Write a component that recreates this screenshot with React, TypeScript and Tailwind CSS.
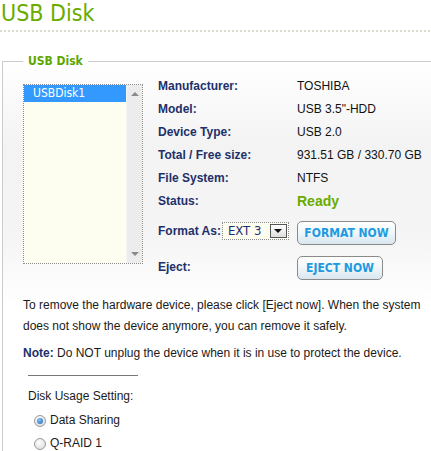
import React from 'react';

const tahoma = "font-['DejaVu_Sans_Condensed','DejaVu_Sans',sans-serif]";

const rows: { label: string; value: string }[] = [
  { label: 'Manufacturer:', value: 'TOSHIBA' },
  { label: 'Model:', value: 'USB 3.5"-HDD' },
  { label: 'Device Type:', value: 'USB 2.0' },
  { label: 'Total / Free size:', value: '931.51 GB / 330.70 GB' },
  { label: 'File System:', value: 'NTFS' },
];

const Radio: React.FC<{ checked?: boolean; label: string }> = ({ checked, label }) => (
  <div className="flex items-center h-[23px] leading-[23px]">
    <span className="ml-[6px] w-[12px] h-[12px] rounded-full border border-[#9a9a9a] bg-[radial-gradient(circle_at_40%_35%,#ffffff,#d6d6d6)] flex items-center justify-center">
      {checked && (
        <span className="w-[6px] h-[6px] rounded-full bg-[radial-gradient(circle_at_40%_35%,#7fc4ff,#1d5fae)]"></span>
      )}
    </span>
    <span className="ml-[4px]">{label}</span>
  </div>
);

const ActionButton: React.FC<{ children: React.ReactNode; className: string }> = ({ children, className }) => (
  <button
    className={`${className} ${tahoma} rounded-[5px] border border-[#8a8a8a] bg-[linear-gradient(to_bottom,#ffffff,#f2f7fa_45%,#d8e6ee)] text-[12px] font-semibold text-[#1e9be0] flex items-center justify-center`}
  >
    {children}
  </button>
);

export default function App() {
  return (
    <div className="w-[431px] h-[451px] overflow-hidden bg-white font-['Liberation_Sans',Arial,sans-serif] text-[12px] text-[#1a1a1a]">
      {/* Page title */}
      <h1 className={`${tahoma} pl-[1px] text-[23px] leading-[26px] text-[#6aab00]`}>USB Disk</h1>
      <div className="mt-[4px] h-[2px] bg-[linear-gradient(to_right,#dcdccb_2px,transparent_2px)] bg-[length:4px_2px]"></div>

      {/* USB Disk group */}
      <fieldset className="mt-[22px] ml-[2px] min-w-0 w-[440px] h-[400px] p-0 border-0 border-t border-l border-solid border-[#cccccc] bg-[linear-gradient(to_bottom,#ffffff_0%,#f3f3f3_22%,#f5f5f5_45%,#ffffff_62%)]">
        <legend className={`${tahoma} ml-[20px] px-[5px] text-[12px] leading-[14px] font-bold text-[#5ea600]`}>USB Disk</legend>

        <div className="flex items-start pl-[20px] mt-[7px]">
          {/* Disk list */}
          <div className="mt-[9px] w-[120px] h-[180px] border border-dotted border-[#8c8c8c] bg-[#fdfdf0] flex">
            <div className="flex-1">
              <div className={`${tahoma} h-[17px] pl-[9px] text-[12px] leading-[17px] text-white bg-[#3399ff]`}>USBDisk1</div>
            </div>
            <div className="w-[16px] bg-[#ececec] border-l border-[#f6f6f6] flex flex-col items-center justify-between py-[7px]">
              <span className="w-0 h-0 border-l-[4px] border-r-[4px] border-b-[4px] border-l-transparent border-r-transparent border-b-[#8a8a8a]"></span>
              <span className="w-0 h-0 border-l-[4px] border-r-[4px] border-t-[4px] border-l-transparent border-r-transparent border-t-[#8a8a8a]"></span>
            </div>
          </div>

          {/* Device info */}
          <div className="ml-[15px]">
            {rows.map((r) => (
              <div key={r.label} className="flex h-[23px] leading-[23px]">
                <span className="w-[139px] font-bold text-[#22306a]">{r.label}</span>
                <span className="text-[#111111]">{r.value}</span>
              </div>
            ))}
            <div className="flex h-[23px] leading-[23px]">
              <span className="w-[139px] font-bold text-[#22306a]">Status:</span>
              <span className="text-[14px] font-bold text-[#6aab00]">Ready</span>
            </div>

            <div className="flex items-start mt-[8px]">
              <div className="w-[139px] flex items-start">
                <span className="font-bold leading-[20px] text-[#22306a]">Format As:</span>
                <div className="ml-[1px] mt-[1px] w-[67px] h-[18px] border border-dotted border-[#8c8c8c] bg-[#fdfdf0] flex items-center justify-between pl-[5px] pr-[1px]">
                  <span className={`${tahoma} text-[13px] text-[#1f2c72]`}>EXT 3</span>
                  <span className="w-[17px] h-[14px] border border-[#555555] bg-[linear-gradient(to_bottom,#ffffff,#dedede)] flex items-center justify-center">
                    <span className="w-0 h-0 border-l-[4px] border-r-[4px] border-t-[4px] border-l-transparent border-r-transparent border-t-[#111111]"></span>
                  </span>
                </div>
              </div>
              <ActionButton className="w-[99px] h-[24px]">FORMAT NOW</ActionButton>
            </div>

            <div className="flex items-start mt-[11px]">
              <span className="w-[139px] font-bold leading-[22px] text-[#22306a]">Eject:</span>
              <ActionButton className="w-[86px] h-[24px]">EJECT NOW</ActionButton>
            </div>
          </div>
        </div>

        {/* Notes */}
        <p className="mt-[15px] ml-[20px] w-[409px] leading-[21px]">
          To remove the hardware device, please click [Eject now]. When the system does not show the device anymore, you can remove it safely.
        </p>
        <p className="mt-[6px] ml-[20px] leading-[21px]">
          <span className="font-bold text-[#22306a]">Note:</span> Do NOT unplug the device when it is in use to protect the device.
        </p>

        <div className="mt-[11px] ml-[25px] w-[110px] h-px bg-[#777777]"></div>

        {/* Disk usage */}
        <div className="mt-[10px] ml-[25px]">
          <div className="leading-[21px]">Disk Usage Setting:</div>
          <div className="mt-[2px]">
            <Radio checked label="Data Sharing" />
            <Radio label="Q-RAID 1" />
          </div>
        </div>
      </fieldset>
    </div>
  );
}
